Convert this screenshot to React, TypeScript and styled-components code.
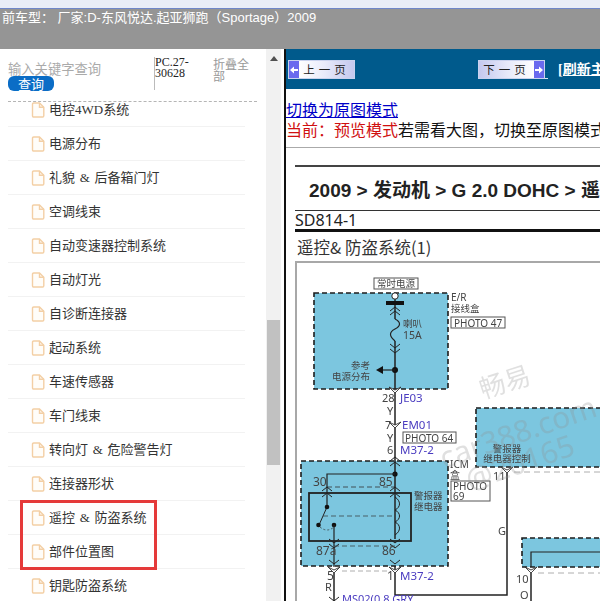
import React from "react";
import styled, { createGlobalStyle } from "styled-components";

const Global = createGlobalStyle`
  html, body { margin: 0; padding: 0; background: #fff; overflow: hidden; }
  body { font-family: "Liberation Sans", "Noto Sans CJK SC", sans-serif; }
`;

const CJK = `"Noto Sans CJK SC", sans-serif`;
const SERIF = `"Liberation Serif", "Noto Sans CJK SC", serif`;

const Page = styled.div`
  position: relative;
  width: 600px;
  height: 601px;
  overflow: hidden;
  display: flex;
  flex-direction: column;
`;
const TopStrip = styled.div`
  height: 8px;
  background: #e9edf7;
  border-bottom: 1px solid #6f86c8;
  flex: none;
`;
const Header = styled.div`
  height: 40px;
  flex: none;
  background: #959595;
  color: #fff;
  font: 13px/17px "Liberation Sans", ${CJK};
  padding: 0 0 0 2px;
  white-space: nowrap;
`;
const Main = styled.div`
  flex: 1;
  min-height: 0;
  display: flex;
`;
const Sidebar = styled.aside`
  width: 284px;
  flex: none;
  display: flex;
  background: #fff;
`;
const SidebarBody = styled.div`
  width: 266px;
  flex: none;
  display: flex;
  flex-direction: column;
`;
const SearchBar = styled.div`
  height: 52px;
  margin: 0 9px 0 8px;
  flex: none;
  border-bottom: 1px dashed #b5b5b5;
  display: grid;
  grid-template-columns: 146px 59px 1fr;
`;
const SearchCol = styled.div`
  padding-top: 12px;
  display: flex;
  flex-direction: column;
  align-items: flex-start;
`;
const Placeholder = styled.div`
  color: #aaa;
  font: 13.3px/15px ${CJK};
  white-space: nowrap;
`;
const QueryButton = styled.button`
  width: 46px;
  height: 15px;
  border: 0;
  padding: 0;
  border-radius: 6px;
  background: #0b6dc6;
  color: #fff;
  font: 13px/15px ${CJK};
`;
const CodeCol = styled.div`
  margin: 8px 0 0;
  height: 33px;
  border-left: 1px solid #bbb;
  font: 12px/11px ${SERIF};
  color: #222;
  width: 45px;
`;
const FoldCol = styled.div`
  margin-top: 9px;
  font: 12px/12px ${CJK};
  color: #999;
  width: 36px;
`;
const ListViewport = styled.div`
  flex: 1;
  min-height: 0;
  overflow: hidden;
`;
const List = styled.ul`
  list-style: none;
  margin: -9px 0 0 8px;
  padding: 0;
  width: 237px;
`;
const Row = styled.li`
  height: 34px;
  box-sizing: border-box;
  border-bottom: 1px solid #f2f2f2;
  display: flex;
  align-items: center;
  gap: 4px;
  padding-left: 23px;
  font: 13px/16px "Liberation Serif", ${CJK};
  word-spacing: 1.5px;
  color: #333;
  white-space: pre;
`;
const Scrollbar = styled.div`
  width: 15px;
  flex: none;
  background: #f1f1f1;
  display: flex;
  flex-direction: column;
  align-items: center;
`;
const ScrollArrow = styled.div`
  margin-top: 7px;
  width: 0;
  height: 0;
  border-left: 4px solid transparent;
  border-right: 4px solid transparent;
  border-bottom: 5px solid #505050;
`;
const ScrollThumb = styled.div`
  margin-top: 259px;
  width: 13px;
  height: 145px;
  background: #c1c1c1;
`;
const Divider = styled.div`
  width: 2px;
  flex: none;
  background: #111;
`;
const Content = styled.main`
  flex: 1;
  min-width: 0;
  overflow: hidden;
  background: #fff;
`;
const NavBar = styled.div`
  height: 39px;
  background: #005a8c;
  display: flex;
  align-items: center;
  padding: 1px 0 0 2px;
  white-space: nowrap;
`;
const PageButton = styled.div<{ $right?: boolean; $gap: number }>`
  width: 67px;
  height: 19px;
  flex: none;
  box-sizing: border-box;
  margin-right: ${(p) => p.$gap}px;
  border: 1px solid #c9d2ee;
  background: linear-gradient(${(p) => (p.$right ? "90deg" : "270deg")}, #c4c8ee 0%, #e8eafa 45%, #ffffff 85%);
  display: flex;
  flex-direction: ${(p) => (p.$right ? "row-reverse" : "row")};
  align-items: center;
  color: #222;
  font: 11.5px/17px ${CJK};
  overflow: hidden;
`;
const ArrowCap = styled.div`
  width: 10px;
  height: 100%;
  flex: none;
  background: #6a6aee;
  color: #fff;
  display: flex;
  align-items: center;
  justify-content: center;
`;
const PageLabel = styled.span`
  flex: 1;
  text-align: center;
  letter-spacing: 4px;
  white-space: nowrap;
`;
const NavTick = styled.div`
  width: 3px;
  height: 1px;
  flex: none;
  background: #dfe8f5;
  margin: 17px 10px 0 0;
`;
const Refresh = styled.a`
  flex: none;
  color: #fff;
  font: bold 14px/18px ${SERIF};
  text-decoration: underline;
`;
const Notice = styled.div`
  height: 59px;
  box-sizing: border-box;
  padding-top: 12px;
  border-bottom: 1px solid #aaa;
  font: 16px/20px "Liberation Serif", ${CJK};
  white-space: nowrap;
  color: #111;
`;
const ModeLink = styled.a`
  display: block;
  color: #0000c8;
  text-decoration: underline;
`;
const ModeNow = styled.span`
  color: #d01010;
`;
const Doc = styled.div`
  padding-left: 9px;
  width: 360px;
  white-space: nowrap;
`;
const DocTitle = styled.div`
  margin-top: 17px;
  border-top: 2px solid #444;
  height: 45px;
  padding: 12px 0 0 14px;
  box-sizing: border-box;
  font: bold 19px/24px "Liberation Sans", ${CJK};
  color: #222;
`;
const DocCode = styled.div`
  border-top: 1px solid #333;
  border-bottom: 3px solid #111;
  height: 18px;
  font: 16px/19px "Noto Sans", "Liberation Sans", sans-serif;
  color: #222;
`;
const DocSub = styled.div`
  height: 29px;
  padding: 5px 0 0 2px;
  box-sizing: border-box;
  font: 16.5px/20px ${CJK};
  color: #333;
`;
const DiagramFrame = styled.div`
  border: 2px solid #a8a8a8;
  border-bottom: 0;
  height: 339px;
  overflow: hidden;
`;
const DiagramSvg = styled.svg`
  display: block;
  filter: blur(0.35px);
`;
const Label = styled.text<{ $size?: number; $blue?: boolean; $end?: boolean; $mid?: boolean }>`
  font-family: "Noto Sans", ${CJK};
  font-size: ${(p) => p.$size ?? 12}px;
  fill: ${(p) => (p.$blue ? "#4a3cc0" : "#444")};
  text-anchor: ${(p) => (p.$end ? "end" : p.$mid ? "middle" : "start")};
`;
const Watermark = styled.text<{ $size: number }>`
  font-family: "Noto Sans", ${CJK};
  font-size: ${(p) => p.$size}px;
  fill: #8f8f8f;
  fill-opacity: 0.28;
`;
const Highlight = styled.div`
  position: absolute;
  left: 20px;
  top: 500px;
  width: 137px;
  height: 70px;
  box-sizing: border-box;
  border: 3px solid #e53a3a;
  pointer-events: none;
`;

const items = [
  "电控4WD系统",
  "电源分布",
  "礼貌 & 后备箱门灯",
  "空调线束",
  "自动变速器控制系统",
  "自动灯光",
  "自诊断连接器",
  "起动系统",
  "车速传感器",
  "车门线束",
  "转向灯 & 危险警告灯",
  "连接器形状",
  "遥控 & 防盗系统",
  "部件位置图",
  "钥匙防盗系统",
];

const FileIcon = () => (
  <svg width="14" height="16" viewBox="0 0 14 16" fill="#fffdf9" stroke="#f3cfa5" strokeWidth="1.4">
    <path d="M1.5 2.2 Q1.5 1 2.7 1 H8.5 L12.8 5.2 V13.8 Q12.8 15 11.6 15 H2.7 Q1.5 15 1.5 13.8 Z" />
    <path d="M8.5 1 V5.2 H12.8" fill="none" />
  </svg>
);

const Arrow = ({ right }: { right?: boolean }) => (
  <svg width="8" height="8" viewBox="0 0 8 8" fill="#fff">
    {right ? <path d="M0 3 H4 V0.5 L8 4 L4 7.5 V5 H0 Z" /> : <path d="M8 3 H4 V0.5 L0 4 L4 7.5 V5 H8 Z" />}
  </svg>
);

const Chev = ({ x, y, up }: { x: number; y: number; up?: boolean }) => (
  <path
    d={up ? `M${x - 5} ${y + 4} L${x} ${y} L${x + 5} ${y + 4}` : `M${x - 5} ${y} L${x} ${y + 4} L${x + 5} ${y}`}
    fill="none"
    stroke="#222"
    strokeWidth="1"
  />
);

const Connector = ({ x, y }: { x: number; y: number }) => (
  <path d={`M${x - 6} ${y} L${x} ${y + 6} L${x + 6} ${y} L${x} ${y + 3} Z`} fill="#fff" stroke="#333" strokeWidth="0.9" />
);

const Panel = ({ x, y, w, h }: { x: number; y: number; w: number; h: number }) => (
  <rect x={x} y={y} width={w} height={h} fill="#7cc6df" stroke="#1c1c1c" strokeWidth="1.6" strokeDasharray="5 3" />
);

const Tag = ({ x, y, w, h }: { x: number; y: number; w: number; h: number }) => (
  <rect x={x} y={y} width={w} height={h} fill="#fff" stroke="#555" strokeWidth="1" />
);

const Diagram = () => (
  <DiagramSvg width="320" height="339" viewBox="297 264 320 339">
    <Panel x={314} y={294} w={134} h={96} />
    <Panel x={301} y={462} w={147} h={105} />
    <Panel x={476} y={409} w={140} h={59} />
    <Panel x={522} y={539} w={100} h={29} />

    <Tag x={374} y={279} w={44} h={11} />
    <Label $size={9.5} x={396} y={288} $mid>常时电源</Label>
    <path d="M395 300 V320 M395 342 V462 M395 462 V540 M395 567 V596 H507 V474" fill="none" stroke="#222" strokeWidth="1.5" />
    <circle cx="395" cy="297" r="3.2" fill="#fff" stroke="#222" />
    <rect x="386" y="302" width="18" height="4" fill="#111" />
    <Chev x={395} y={308} up />
    <Chev x={395} y={312} up />
    <path d="M395 320 C401 323 401 327 395 330 C389 333 389 337 395 342" fill="none" stroke="#222" strokeWidth="1.2" />
    <Chev x={395} y={345} />
    <Chev x={395} y={350} />
    <circle cx="395" cy="371" r="3" fill="#111" />
    <path d="M395 371 H382" stroke="#222" strokeWidth="1.2" />
    <path d="M376 371 L383 367 V375 Z" fill="#111" />
    <Label $size={9.5} x={370} y={370} $end>参考</Label>
    <Label $size={9.5} x={370} y={381} $end>电源分布</Label>
    <Label $size={9.5} x={403} y={328}>喇叭</Label>
    <Label $size={10.5} x={403} y={340}>15A</Label>
    <Label $size={10} x={451} y={302}>E/R</Label>
    <Label $size={9.5} x={451} y={313}>接线盒</Label>
    <Tag x={451} y={318} w={54} h={11} />
    <Label $size={10} x={454} y={327.5}>PHOTO 47</Label>

    <Connector x={395} y={388} />
    <Label $size={11} x={382} y={403}>28</Label>
    <Label $size={11.5} $blue x={400} y={403}>JE03</Label>
    <Label $size={11} x={387} y={416}>Y</Label>
    <Connector x={395} y={423} />
    <Label $size={11} x={385} y={430}>7</Label>
    <Label $size={11.5} $blue x={402} y={430}>EM01</Label>
    <Label $size={11} x={387} y={443}>Y</Label>
    <Tag x={403} y={433} w={53} h={11} />
    <Label $size={10} x={405} y={442.5}>PHOTO 64</Label>
    <Label $size={11} x={387} y={455}>6</Label>
    <Label $size={11.5} $blue x={400} y={455}>M37-2</Label>
    <Chev x={395} y={458} up />
    <Chev x={395} y={463} up />
    <circle cx="395" cy="475" r="2.6" fill="#111" />
    <path d="M395 475 H327 V508" fill="none" stroke="#222" strokeWidth="1.2" />
    <path d="M327 488 H395" fill="none" stroke="#333" strokeWidth="0.8" strokeDasharray="5 3" />
    <Chev x={327} y={488} up />
    <Chev x={395} y={488} up />
    <Chev x={327} y={494} up />
    <Chev x={395} y={494} up />
    <Label x={313} y={487}>30</Label>
    <Label x={379} y={487}>85</Label>
    <Label $size={10} x={450} y={469}>ICM</Label>
    <Label $size={10} x={450} y={480}>盒</Label>
    <Tag x={451} y={482} w={39} h={20} />
    <Label $size={10} x={453} y={491}>PHOTO</Label>
    <Label $size={10} x={453} y={500.5}>69</Label>
    <Label $size={9.5} x={414} y={500}>警报器</Label>
    <Label $size={9.5} x={414} y={511}>继电器</Label>
    <rect x="309" y="494" width="102" height="48" fill="none" stroke="#222" strokeWidth="1.8" />
    <path d="M395 498 C401 502 401 508 395 511 C401 514 401 520 395 523 C401 526 401 532 395 536" fill="none" stroke="#222" strokeWidth="1" />
    <path d="M327 508 L319 526" stroke="#222" strokeWidth="1" />
    <circle cx="327" cy="508" r="2.3" fill="#111" />
    <circle cx="318.5" cy="526" r="2.3" fill="#111" />
    <circle cx="334" cy="526" r="2.3" fill="#111" />
    <path d="M323 517 H395" stroke="#333" strokeWidth="0.7" strokeDasharray="5 3" />
    <path d="M320 528 Q327 534 334 528" fill="none" stroke="#333" strokeWidth="0.7" strokeDasharray="2 2" />
    <path d="M334 526 V568" stroke="#222" strokeWidth="1.2" />
    <Chev x={334} y={540} />
    <Chev x={395} y={540} />
    <Chev x={334} y={545} />
    <Chev x={395} y={545} />
    <path d="M334 547 H395" stroke="#333" strokeWidth="0.7" strokeDasharray="5 3" />
    <Label x={316} y={556}>87a</Label>
    <Label x={382} y={556}>86</Label>
    <Chev x={334} y={561} />
    <Chev x={395} y={561} />
    <Connector x={334} y={568} />
    <Connector x={395} y={568} />
    <path d="M342 572 H390" stroke="#999" strokeWidth="0.8" strokeDasharray="5 3" />
    <Label x={327} y={581}>5</Label>
    <Label x={387} y={581}>1</Label>
    <Label $size={11.5} $blue x={400} y={581}>M37-2</Label>
    <Label $size={11} x={325} y={592}>R</Label>
    <path d="M334 574 V603" stroke="#222" strokeWidth="1.5" />
    <Chev x={334} y={598} />
    <Label $size={11} $blue x={342} y={604}>MS02(0.8 GRY</Label>

    <Label $size={9.5} x={507} y={453} $mid>警报器</Label>
    <Label $size={9.5} x={507} y={463} $mid>继电器控制</Label>
    <Connector x={507} y={468} />
    <path d="M514 473 H616" stroke="#999" strokeWidth="0.8" strokeDasharray="6 4" />
    <Label $size={11} x={493} y={481}>11</Label>
    <Label $size={11} x={498} y={536}>G</Label>

    <path d="M616 553 H531 V568" fill="none" stroke="#222" strokeWidth="1.2" />
    <Connector x={531} y={568} />
    <path d="M538 574 H616" stroke="#999" strokeWidth="0.8" strokeDasharray="6 4" />
    <path d="M531 574 V603" stroke="#222" strokeWidth="1.5" />
    <Label $size={11} x={516} y={584}>10</Label>
    <Label $size={11} x={520} y={600}>O</Label>

    <Watermark $size={26} transform="rotate(-18 483 400)" x="483" y="400">畅易</Watermark>
    <Watermark $size={30} transform="rotate(-19 444 470)" x="444" y="470">car388.com</Watermark>
    <Watermark $size={30} transform="rotate(-19 470 492)" x="470" y="492">@20165</Watermark>
  </DiagramSvg>
);

export default function App() {
  return (
    <>
      <Global />
      <Page>
        <TopStrip />
        <Header>前车型： 厂家:D-东风悦达.起亚狮跑（Sportage）2009</Header>
        <Main>
          <Sidebar>
            <SidebarBody>
              <SearchBar>
                <SearchCol>
                  <Placeholder>输入关键字查询</Placeholder>
                  <QueryButton>查询</QueryButton>
                </SearchCol>
                <CodeCol>PC.27-30628</CodeCol>
                <FoldCol>折叠全部</FoldCol>
              </SearchBar>
              <ListViewport>
                <List>
                  {items.map((t) => (
                    <Row key={t}>
                      <FileIcon />
                      {t}
                    </Row>
                  ))}
                </List>
              </ListViewport>
            </SidebarBody>
            <Scrollbar>
              <ScrollArrow />
              <ScrollThumb />
            </Scrollbar>
          </Sidebar>
          <Divider />
          <Content>
            <NavBar>
              <PageButton $gap={123}>
                <ArrowCap><Arrow /></ArrowCap>
                <PageLabel>上一页</PageLabel>
              </PageButton>
              <PageButton $right $gap={0}>
                <ArrowCap><Arrow right /></ArrowCap>
                <PageLabel>下一页</PageLabel>
              </PageButton>
              <NavTick />
              <Refresh>[刷新主页面]</Refresh>
            </NavBar>
            <Notice>
              <ModeLink>切换为原图模式</ModeLink>
              <ModeNow>当前：预览模式</ModeNow>若需看大图，切换至原图模式
            </Notice>
            <Doc>
              <DocTitle>2009 &gt; 发动机 &gt; G 2.0 DOHC &gt; 遥控 &amp; 防盗系统</DocTitle>
              <DocCode>SD814-1</DocCode>
              <DocSub>遥控&amp; 防盗系统(1)</DocSub>
              <DiagramFrame>
                <Diagram />
              </DiagramFrame>
            </Doc>
          </Content>
        </Main>
        <Highlight />
      </Page>
    </>
  );
}
